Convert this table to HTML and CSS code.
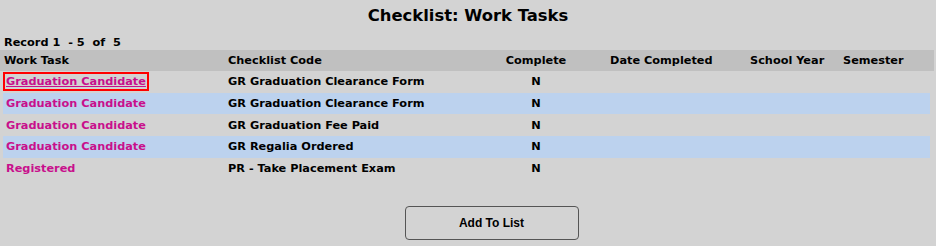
FILE: index.html
```html
<!DOCTYPE html>
<html lang="en">
<head>
    <meta charset="UTF-8">
    <meta name="viewport" content="width=device-width, initial-scale=1.0">
    <title>Checklist: Work Tasks</title>
    <link rel="stylesheet" href="styles.css">
</head>
<body>
    <h1 class="page-title">Checklist: Work Tasks</h1>
    <div class="record-count">Record 1&nbsp; - 5&nbsp; of&nbsp; 5</div>

    <div class="task-grid">
        <div class="grid-row grid-head">
            <div>Work Task</div>
            <div>Checklist Code</div>
            <div class="col-complete">Complete</div>
            <div class="col-date">Date Completed</div>
            <div>School Year</div>
            <div>Semester</div>
        </div>
        <div class="grid-row">
            <div><a href="#" class="task-link focused">Graduation Candidate</a></div>
            <div>GR Graduation Clearance Form</div>
            <div class="col-complete">N</div>
            <div class="col-date"></div>
            <div></div>
            <div></div>
        </div>
        <div class="grid-row alt">
            <div><a href="#" class="task-link">Graduation Candidate</a></div>
            <div>GR Graduation Clearance Form</div>
            <div class="col-complete">N</div>
            <div class="col-date"></div>
            <div></div>
            <div></div>
        </div>
        <div class="grid-row">
            <div><a href="#" class="task-link">Graduation Candidate</a></div>
            <div>GR Graduation Fee Paid</div>
            <div class="col-complete">N</div>
            <div class="col-date"></div>
            <div></div>
            <div></div>
        </div>
        <div class="grid-row alt">
            <div><a href="#" class="task-link">Graduation Candidate</a></div>
            <div>GR Regalia Ordered</div>
            <div class="col-complete">N</div>
            <div class="col-date"></div>
            <div></div>
            <div></div>
        </div>
        <div class="grid-row">
            <div><a href="#" class="task-link">Registered</a></div>
            <div>PR - Take Placement Exam</div>
            <div class="col-complete">N</div>
            <div class="col-date"></div>
            <div></div>
            <div></div>
        </div>
    </div>

    <div class="actions">
        <button class="add-btn">Add To List</button>
    </div>
</body>
</html>
```

FILE: styles.css
```css
body {
    font-family: "DejaVu Sans", sans-serif;
    font-weight: bold;
    margin: 0;
    padding: 0;
    background-color: #d3d3d3;
    color: #000;
}

.page-title {
    margin: 0;
    padding-top: 5px;
    height: 26px;
    text-align: center;
    font-size: 16.4px;
    line-height: 22px;
}

.record-count {
    padding: 5px 0 0 4px;
    height: 14px;
    font-size: 11.3px;
    line-height: 14px;
}

.task-grid {
    width: 934px;
}

.grid-row {
    display: grid;
    grid-template-columns: 224px 270px 76px 176px 93px 1fr;
    align-items: center;
    height: 21.7px;
    margin: 0 4px 0 3px;
    padding-left: 1px;
    font-size: 11.3px;
}

.grid-row.grid-head {
    margin: 0;
    padding-left: 4px;
    height: 21px;
    background-color: #c0c0c0;
}

.grid-row.alt {
    background-color: #bcd2ee;
}

.col-complete {
    text-align: center;
}

.col-date {
    padding-left: 36px;
}

.task-link {
    color: #c8108c;
    text-decoration: none;
    margin-left: 2px;
}

.task-link.focused {
    text-decoration: underline;
    outline: 2px solid #f00;
    outline-offset: 1px;
}

.actions {
    display: flex;
    justify-content: center;
    padding-top: 27px;
}

.add-btn {
    width: 174px;
    height: 34px;
    margin-left: 47px;
    background: transparent;
    border: 1px solid #555;
    border-radius: 4px;
    font-family: "Liberation Sans", Arial, sans-serif;
    font-weight: bold;
    font-size: 12px;
    color: #000;
}
```
